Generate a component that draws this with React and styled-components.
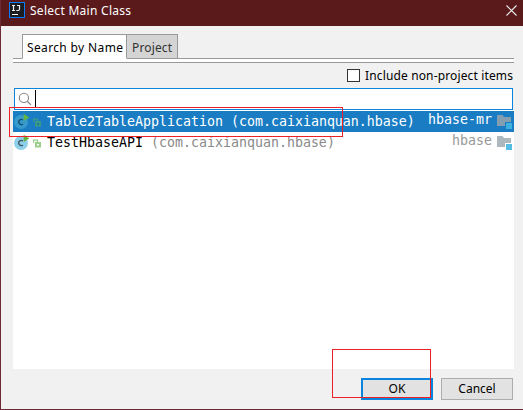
import React from "react";
import styled, { createGlobalStyle } from "styled-components";

const Global = createGlobalStyle`
  * { box-sizing: border-box; }
  body { margin: 0; overflow: hidden; }
`;

const Dialog = styled.div`
  position: relative;
  display: flex;
  flex-direction: column;
  width: 523px;
  height: 410px;
  background: #f1f1f1;
  border-left: 1px solid #6e2b36;
  border-bottom: 1px solid #6e2b36;
  font-family: "Noto Sans", sans-serif;
  font-size: 12px;
  color: #000;
`;

const TitleBar = styled.header`
  display: flex;
  flex: none;
  height: 26px;
  padding: 2px 6px 0 8px;
  background: #5a1a1c;
  color: #fff;
`;

const Title = styled.div`
  flex: 1;
  margin-left: 5px;
  line-height: 17px;
`;

const CloseIcon = styled.svg`
  margin-top: 3px;
  width: 11px;
  height: 11px;
`;

const Label = styled.span`
  display: inline-block;
  white-space: pre;
  letter-spacing: ${(p) => p.$spacing || "0"};
`;

const TabStrip = styled.nav`
  display: flex;
  flex: none;
  height: 29px;
  margin: 8px 9px 0 12px;
  padding-left: 9px;
  background: linear-gradient(
    transparent 24px, #999 24px, #999 25px, #fff 25px, #fff 28px, #999 28px
  );
`;

const Tab = styled.div`
  width: ${(p) => p.$width};
  height: 25px;
  padding-left: ${(p) => (p.$active ? "4px" : "5px")};
  border: 1px solid #999;
  border-left-width: ${(p) => (p.$active ? "1px" : "0")};
  border-bottom-color: ${(p) => (p.$active ? "#fff" : "#999")};
  background: ${(p) => (p.$active ? "#fff" : "#d4d4d4")};
  color: ${(p) => (p.$active ? "#000" : "#333")};
  line-height: 25px;
`;

const Options = styled.label`
  display: flex;
  flex: none;
  justify-content: flex-end;
  height: 25px;
  padding: 6px 9px 0 0;
`;

const CheckBox = styled.span`
  width: 13px;
  height: 13px;
  margin-right: 5px;
  border: 1px solid #333;
  background: #fff;
`;

const CheckLabel = styled.span`
  width: 149px;
  line-height: 14px;
`;

const SearchField = styled.div`
  display: flex;
  flex: none;
  width: 499px;
  height: 22px;
  margin-left: 13px;
  padding: 3px 3px;
  border: 1px solid #0a84dc;
  background: #fff;
`;

const Caret = styled.span`
  width: 1px;
  height: 17px;
  margin: -2px 0 0 3px;
  background: #000;
`;

const ResultList = styled.ul`
  flex: none;
  width: 501px;
  height: 259px;
  margin: 0 0 0 12px;
  padding: 1px 0 0;
  background: #fff;
  list-style: none;
  font-family: "DejaVu Sans Mono", monospace;
  font-size: 13.29px;
`;

const ResultRow = styled.li`
  display: flex;
  height: 21px;
  padding-right: 2px;
  background: ${(p) => (p.$selected ? "#1a7dc4" : "#fff")};
  color: ${(p) => (p.$selected ? "#fff" : "#000")};
  line-height: 21px;
  white-space: pre;
`;

const ClassName = styled.span`
  flex: 1;
  margin-left: 5px;
`;

const Package = styled.span`
  color: ${(p) => (p.$selected ? "#fff" : "#8a8a8a")};
`;

const Module = styled.span`
  margin-right: 5px;
  line-height: 18px;
  color: ${(p) => (p.$selected ? "#fff" : "#999")};
`;

const RowIcon = styled.svg`
  flex: none;
`;

const Actions = styled.footer`
  display: flex;
  justify-content: flex-end;
  gap: 8px;
  padding: 9px 10px 0 0;
`;

const Button = styled.button`
  width: 72px;
  height: 22px;
  padding: 0;
  border: ${(p) => (p.$primary ? "2px solid #0a84dc" : "1px solid #adadad")};
  background: #e2e2e2;
  color: #000;
  font: inherit;
  line-height: 18px;
`;

const Highlight = styled.div`
  position: absolute;
  border: 1px solid #ee2027;
  pointer-events: none;
`;

const ResultHighlight = styled(Highlight)`
  left: 8px;
  top: 107px;
  width: 334px;
  height: 30px;
`;

const ConfirmHighlight = styled(Highlight)`
  left: 331px;
  top: 349px;
  width: 99px;
  height: 49px;
`;

function AppIcon() {
  return (
    <svg width="16" height="16" viewBox="0 0 16 16">
      <rect x=".5" y=".5" width="15" height="15" fill="#1b1d20" stroke="#087cfa" />
      <path d="M3 3.5h3M4.5 3v5M3 8.5h3M8 3.5h3M10.5 3v4q0 1.5-1.3 1.5H7.3" fill="none" stroke="#eee" strokeWidth="1.2" />
      <path d="M3 12.5h6" stroke="#fff" />
    </svg>
  );
}

function SearchIcon() {
  return (
    <svg width="14" height="14" viewBox="0 0 14 14" fill="none" stroke="#858585">
      <circle cx="5.9" cy="5.9" r="4.6" strokeWidth="1.1" />
      <path d="M9.2 9.2l3.7 3.7" strokeWidth="1.3" />
    </svg>
  );
}

function ClassIcon({ selected }) {
  const lock = selected ? "#3b9b87" : "#9bcf8b";
  return (
    <RowIcon width="29" height="21" viewBox="0 0 29 21">
      <circle cx="8" cy="11" r="7" fill={selected ? "#369bcc" : "#8ed0e9"} />
      <path
        d="M9.9 9.1a2.5 2.5 0 1 0 0 3.8"
        fill="none"
        stroke={selected ? "#174d70" : "#3c5561"}
        strokeWidth="1.3"
      />
      <path d="M10.7 2.7v7.3l5.6-3.6z" fill="#62b543" />
      <path d="M20.6 11V8.1h3.9V10" fill="none" stroke={lock} strokeWidth="1.2" />
      <path d="M22 10h6v5.5h-6z" fill={lock} />
      <path d="M24 12h2v1.5h-2z" fill={selected ? "#1c6c9c" : "#fff"} />
    </RowIcon>
  );
}

function ModuleIcon({ selected }) {
  const base = selected ? "#1a7dc4" : "#fff";
  return (
    <RowIcon width="15" height="21" viewBox="0 0 15 21">
      <path d="M0 4h5.5L7 6h7v9H0z" fill={selected ? "#839eb0" : "#adb8be"} />
      <path d="M8 11h7v8H8z" fill={base} />
      <path d="M9 12h6v6H9z" fill={selected ? "#3cb0df" : "#55bce5"} />
    </RowIcon>
  );
}

const results = [
  { name: "Table2TableApplication", pkg: "com.caixianquan.hbase", module: "hbase-mr", selected: true },
  { name: "TestHbaseAPI", pkg: "com.caixianquan.hbase", module: "hbase", selected: false },
];

export default function App() {
  return (
    <>
      <Global />
      <Dialog>
        <TitleBar>
          <AppIcon />
          <Title><Label $spacing="0.28px">Select Main Class</Label></Title>
          <CloseIcon viewBox="0 0 11 11">
            <path d="M.5 .5l10 10M10.5 .5l-10 10" stroke="#eee" strokeWidth="1.1" />
          </CloseIcon>
        </TitleBar>
        <TabStrip>
          <Tab $active $width="105px"><Label $spacing="0.36px">Search by Name</Label></Tab>
          <Tab $width="51px"><Label $spacing="0.14px">Project</Label></Tab>
        </TabStrip>
        <Options>
          <CheckBox />
          <CheckLabel><Label $spacing="0.14px">Include non-project items</Label></CheckLabel>
        </Options>
        <SearchField>
          <SearchIcon />
          <Caret />
        </SearchField>
        <ResultList>
          {results.map((r) => (
            <ResultRow key={r.name} $selected={r.selected}>
              <ClassIcon selected={r.selected} />
              <ClassName>
                {r.name} <Package $selected={r.selected}>({r.pkg})</Package>
              </ClassName>
              <Module $selected={r.selected}>{r.module}</Module>
              <ModuleIcon selected={r.selected} />
            </ResultRow>
          ))}
        </ResultList>
        <Actions>
          <Button $primary>OK</Button>
          <Button>Cancel</Button>
        </Actions>
        <ResultHighlight />
        <ConfirmHighlight />
      </Dialog>
    </>
  );
}
